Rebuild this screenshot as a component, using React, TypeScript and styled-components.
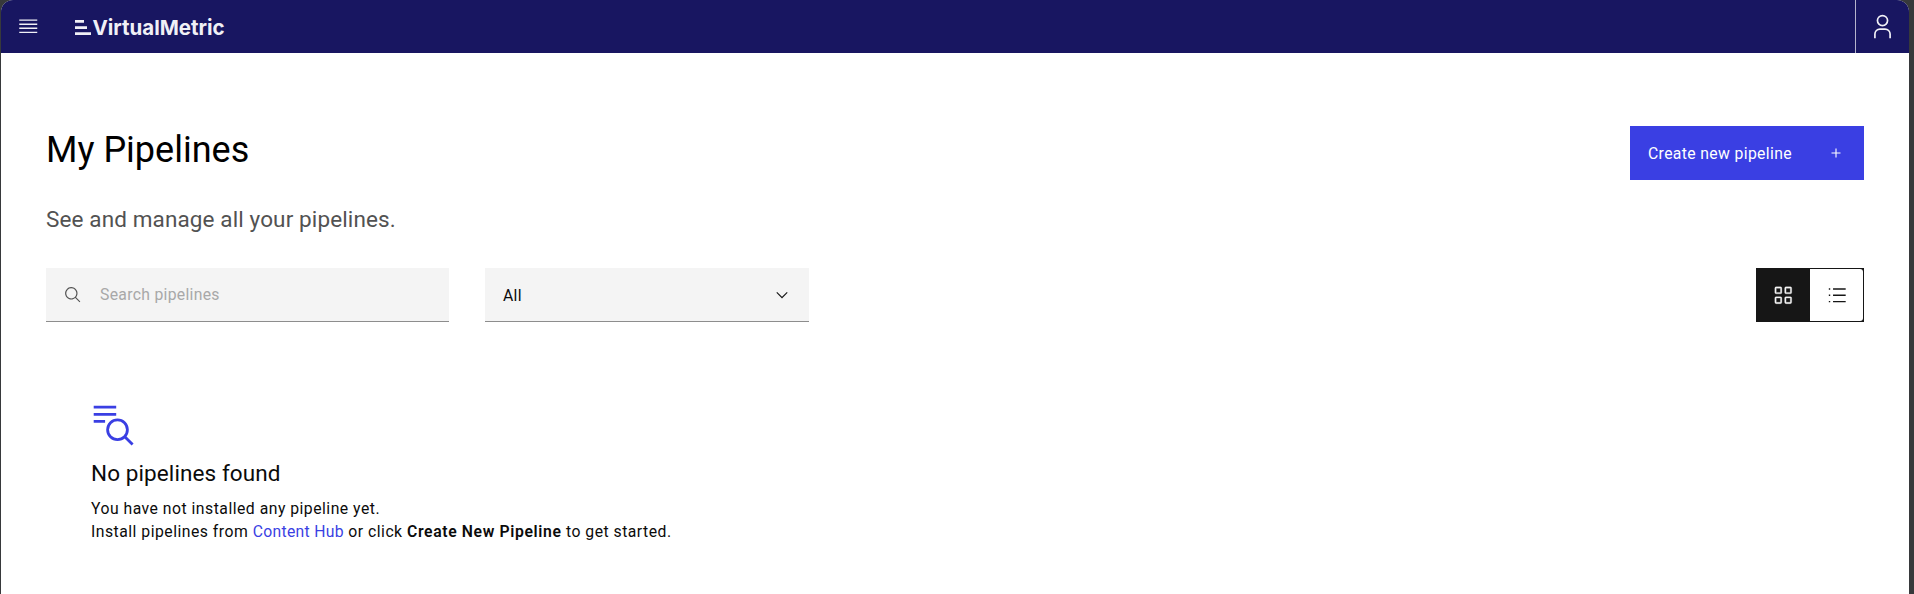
import React from "react";
import styled, { createGlobalStyle } from "styled-components";

const GlobalStyle = createGlobalStyle`
  *, *::before, *::after { box-sizing: border-box; }
  body {
    margin: 0;
    background: #37393b;
    font-family: Roboto, "Liberation Sans", sans-serif;
    color: #0b0b0b;
  }
  h1, h2, p { margin: 0; font-weight: 400; }
  button { font: inherit; border: 0; padding: 0; cursor: pointer; }
  svg { display: block; flex: none; }
`;

const Window = styled.div`
  height: 594px;
  margin: 0 5px 0 1px;
  background: #fff;
  border-radius: 12px 12px 0 0;
  overflow: hidden;
`;

const Header = styled.header`
  display: flex;
  align-items: center;
  height: 53px;
  padding-left: 16px;
  background: #181661;
  color: #f0f0f6;
`;

const MenuButton = styled.button`
  background: none;
  color: inherit;
`;

const Brand = styled.div`
  display: flex;
  align-items: center;
  gap: 2px;
  margin: 2px auto 0 35px;
`;

const BrandName = styled.span`
  padding-top: 1px;
  font: 700 20.5px/24px Inter, "Liberation Sans", sans-serif;
  letter-spacing: -0.02px;
`;

const UserButton = styled.button`
  display: flex;
  align-items: center;
  justify-content: center;
  width: 54px;
  height: 53px;
  background: none;
  color: inherit;
  border-left: 1px solid #b4b4cc;
`;

const Main = styled.main`
  padding: 73px 45px 0;
`;

const TitleRow = styled.div`
  display: flex;
  justify-content: space-between;
  height: 54px;
`;

const Title = styled.h1`
  padding-top: 1px;
  font-size: 36px;
  line-height: 46px;
  color: #000;
`;

const CreateButton = styled.button`
  display: flex;
  align-items: center;
  justify-content: space-between;
  width: 234px;
  height: 54px;
  padding: 0 19px 0 18px;
  background: #3a3fe3;
  color: #fff;
  font-size: 15.75px;
  letter-spacing: 0.36px;
`;

const Subtitle = styled.p`
  margin-top: 23px;
  font-size: 22.5px;
  line-height: 32px;
  letter-spacing: 0.12px;
  color: #525252;
`;

const Toolbar = styled.div`
  display: flex;
  gap: 36px;
  margin-top: 33px;
`;

const Field = styled.div<{ $width: number }>`
  display: flex;
  align-items: center;
  width: ${(p) => p.$width}px;
  height: 54px;
  padding: 0 18px;
  background: #f4f4f4;
  border-bottom: 1px solid #8d8d8d;
  font-size: 15.75px;
  letter-spacing: 0.3px;
`;

const SearchInput = styled.input`
  flex: 1;
  margin-left: 18px;
  padding: 0;
  border: 0;
  outline: 0;
  background: none;
  font: inherit;
  letter-spacing: inherit;
  &::placeholder { color: #a8a8a8; opacity: 1; }
`;

const Selected = styled.span`
  flex: 1;
  padding-top: 1px;
`;

const ViewSwitch = styled.div`
  display: flex;
  width: 108px;
  height: 54px;
  margin-left: auto;
  padding: 1px;
  background: linear-gradient(to right, #161616 50%, #fff 50%, #fff calc(100% - 10px), #161616 calc(100% - 10px));
  border: solid #161616;
  border-width: 1px 0;
  padding: 0 1px;
`;

const ViewButton = styled.button<{ $active?: boolean }>`
  display: flex;
  align-items: center;
  justify-content: center;
  flex: 1;
  padding-left: ${(p) => (p.$active ? 0 : 1)}px;
  border-radius: 0 3px 3px 0;
  background: ${(p) => (p.$active ? "#161616" : "#fff")};
  color: ${(p) => (p.$active ? "#f4f4f4" : "#161616")};
`;

const EmptyState = styled.section`
  padding: 82px 45px 0;
`;

const EmptyTitle = styled.h2`
  margin-top: 8px;
  font-size: 22.5px;
  line-height: 32px;
  letter-spacing: 0.1px;
`;

const EmptyText = styled.p`
  margin-top: 8px;
  font-size: 15.75px;
  line-height: 23px;
  letter-spacing: 0.49px;
`;

const Link = styled.a`
  color: #3a3fe3;
  letter-spacing: 0.3px;
`;

const Strong = styled.strong`
  font-weight: 600;
  letter-spacing: 0.63px;
`;

export default function App() {
  return (
    <>
      <GlobalStyle />
      <Window>
        <Header>
          <MenuButton aria-label="Menu">
            <svg width="22.5" height="22.5" viewBox="0 0 20 20" fill="currentColor">
              <path d="M2 14.8h16V16H2zM2 11.2h16v1.2H2zM2 7.6h16v1.2H2zM2 4h16v1.2H2z" />
            </svg>
          </MenuButton>
          <Brand>
            <svg width="16" height="16" viewBox="0 0 16 16" fill="currentColor">
              <path d="M0 0h9v2.7H0zM0 6.2h12v2.7H0zM0 12.3h16V15H0z" />
            </svg>
            <BrandName>VirtualMetric</BrandName>
          </Brand>
          <UserButton aria-label="User">
            <svg width="27" height="27" viewBox="0 0 32 32" fill="currentColor">
              <path d="M16 4a5 5 0 1 1-5 5 5 5 0 0 1 5-5m0-2a7 7 0 1 0 7 7 7 7 0 0 0-7-7zM26 30h-2v-5a5 5 0 0 0-5-5h-6a5 5 0 0 0-5 5v5H6v-5a7 7 0 0 1 7-7h6a7 7 0 0 1 7 7z" />
            </svg>
          </UserButton>
        </Header>
        <Main>
          <TitleRow>
            <Title>My Pipelines</Title>
            <CreateButton>
              Create new pipeline
              <svg width="18" height="18" viewBox="0 0 32 32" fill="currentColor">
                <path d="M17 15V8h-2v7H8v2h7v7h2v-7h7v-2z" />
              </svg>
            </CreateButton>
          </TitleRow>
          <Subtitle>See and manage all your pipelines.</Subtitle>
          <Toolbar>
            <Field $width={403}>
              <svg width="18" height="18" viewBox="0 0 32 32" fill="#525252">
                <path d="M29 27.586l-7.552-7.552a11.018 11.018 0 1 0-1.414 1.414L27.586 29zM4 13a9 9 0 1 1 9 9 9.01 9.01 0 0 1-9-9z" />
              </svg>
              <SearchInput placeholder="Search pipelines" />
            </Field>
            <Field $width={324}>
              <Selected>All</Selected>
              <svg width="18" height="18" viewBox="0 0 16 16" fill="#161616">
                <path d="M8 11L3 6l.7-.7L8 9.6l4.3-4.3.7.7z" />
              </svg>
            </Field>
            <ViewSwitch>
              <ViewButton $active aria-label="Grid view">
                <svg width="22.5" height="22.5" viewBox="0 0 32 32" fill="currentColor" fillRule="evenodd" stroke="currentColor" strokeWidth="0.4">
                  <path d="M12 4H6a2 2 0 0 0-2 2v6a2 2 0 0 0 2 2h6a2 2 0 0 0 2-2V6a2 2 0 0 0-2-2zm0 8H6V6h6zM26 4h-6a2 2 0 0 0-2 2v6a2 2 0 0 0 2 2h6a2 2 0 0 0 2-2V6a2 2 0 0 0-2-2zm0 8h-6V6h6zM12 18H6a2 2 0 0 0-2 2v6a2 2 0 0 0 2 2h6a2 2 0 0 0 2-2v-6a2 2 0 0 0-2-2zm0 8H6v-6h6zM26 18h-6a2 2 0 0 0-2 2v6a2 2 0 0 0 2 2h6a2 2 0 0 0 2-2v-6a2 2 0 0 0-2-2zm0 8h-6v-6h6z" />
                </svg>
              </ViewButton>
              <ViewButton aria-label="List view">
                <svg width="22.5" height="22.5" viewBox="0 0 32 32" fill="currentColor">
                  <path d="M10 6h18v2H10zM10 15h18v2H10zM10 24h18v2H10zM4 15h2v2H4zM4 6h2v2H4zM4 24h2v2H4z" />
                </svg>
              </ViewButton>
            </ViewSwitch>
          </Toolbar>
          <EmptyState>
            <svg width="45" height="45" viewBox="0 0 45 45" fill="none" stroke="#3a3fe3" strokeWidth="2.8">
              <path d="M2.7 3.2h22.5M2.7 10.3h22.5M2.7 17.4h11.4M34 33l7.6 7.6" />
              <circle cx="26.5" cy="25.7" r="9.9" />
            </svg>
            <EmptyTitle>No pipelines found</EmptyTitle>
            <EmptyText>
              You have not installed any pipeline yet.
              <br />
              Install pipelines from <Link>Content Hub</Link> or click <Strong>Create New Pipeline</Strong> to get started.
            </EmptyText>
          </EmptyState>
        </Main>
      </Window>
    </>
  );
}
